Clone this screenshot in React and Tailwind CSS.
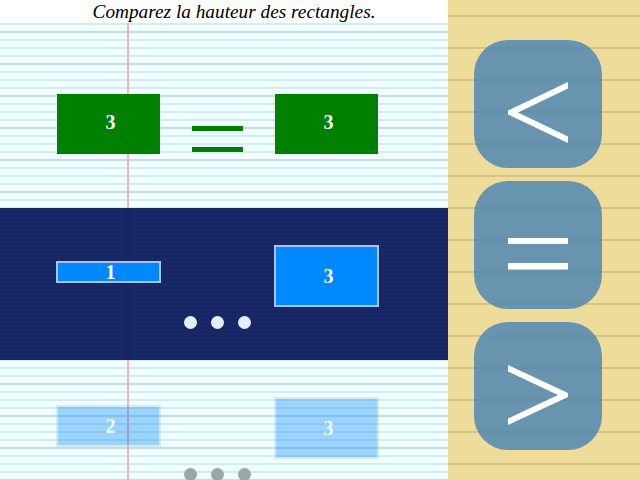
import React from "react";

const rows = [
  { left: 3, right: 3, state: "done" },
  { left: 1, right: 3, state: "current" },
  { left: 2, right: 3, state: "next" },
];

// top offset and height of a rectangle inside its row, by value
const sizeClass = {
  1: "mt-[53px] h-[22px]",
  2: "mt-[45px] h-[42px]",
  3: "mt-[37px] h-[62px]",
};

const Rect = ({ value, state }) => {
  const colour =
    state === "done"
      ? "bg-[#008000] border border-transparent bg-clip-padding pb-[4px]"
      : "bg-[#0088ff] border-2 border-[#a9c4ec]";
  return (
    <div
      className={`${sizeClass[value]} w-[105px] ${colour} flex items-center justify-center pl-[4px] text-white font-bold text-[20px] font-['Liberation_Serif',serif] leading-none`}
    >
      {value}
    </div>
  );
};

const Dots = ({ faded }) => (
  <div className="mt-[108px] flex gap-[14px]">
    {[0, 1, 2].map((i) => (
      <div
        key={i}
        className={`w-[13px] h-[13px] rounded-full ${
          faded ? "bg-[#9ba7a7]" : "bg-[#e2eefa]"
        }`}
      />
    ))}
  </div>
);

const Row = ({ row }) => {
  const wrap =
    row.state === "done"
      ? "h-[185px] pt-[33px]"
      : row.state === "current"
      ? "h-[152px] bg-[#001155]/90"
      : "h-[152px]";
  return (
    <div className={`${wrap} flex pl-[56px] shrink-0`}>
      <div
        className={`w-[105px] flex justify-center items-start ${
          row.state === "next" ? "opacity-35" : ""
        }`}
      >
        <Rect value={row.left} state={row.state} />
      </div>
      <div className="w-[113px] flex flex-col items-center">
        {row.state === "done" ? (
          <div className="mt-[70px] flex flex-col gap-[16px]">
            <div className="w-[51px] h-[5px] bg-[#008000]" />
            <div className="w-[51px] h-[5px] bg-[#008000]" />
          </div>
        ) : (
          <Dots faded={row.state === "next"} />
        )}
      </div>
      <div
        className={`w-[105px] flex justify-center items-start ${
          row.state === "next" ? "opacity-35" : ""
        }`}
      >
        <Rect value={row.right} state={row.state} />
      </div>
    </div>
  );
};

const Button = ({ children }) => (
  <button className="w-[128px] h-[128px] rounded-[34px] bg-[#4682b4]/80 shrink-0">
    <svg width="128" height="128" viewBox="0 0 128 128" fill="#ffffff">
      {children}
    </svg>
  </button>
);

const App = () => {
  return (
    <div className="flex w-[640px] h-[480px] overflow-hidden">
      <div className="w-[448px] h-full flex flex-col overflow-hidden bg-[#f0ffff] bg-[image:linear-gradient(to_right,transparent_127px,#f2b4b4_127px,#f2b4b4_129px,transparent_129px),repeating-linear-gradient(to_bottom,#c8dcdc_0px,#c8dcdc_1px,transparent_1px,transparent_31px,#c8dcdc_31px,#c8dcdc_32px),repeating-linear-gradient(to_bottom,#d6ebed_0px,#d6ebed_1px,transparent_1px,transparent_7px,#d6ebed_7px,#d6ebed_8px)]">
        <div className="h-[23px] shrink-0 bg-white pl-[20px] text-center italic text-[19.3px] leading-[23px] text-black font-['Liberation_Serif',serif]">
          Comparez la hauteur des rectangles.
        </div>
        {rows.map((row, i) => (
          <Row key={i} row={row} />
        ))}
      </div>
      <div className="w-[192px] h-full flex flex-col pl-[26px] pt-[40px] gap-[13px] bg-[#eedc9a] bg-[image:repeating-linear-gradient(to_bottom,transparent_0px,transparent_15px,#d6c486_15px,#d6c486_17px,transparent_17px,transparent_32px)]">
        <Button>
          <polygon points="94,42 94,48.5 44,72.5 94,96.5 94,103 34,74.5 34,70.5" />
        </Button>
        <Button>
          <rect x="34" y="57" width="60" height="6" />
          <rect x="34" y="82" width="60" height="6.5" />
        </Button>
        <Button>
          <polygon points="34,43 94,71 94,75 34,103 34,96.5 84,73 34,49.5" />
        </Button>
      </div>
    </div>
  );
};

export default App;
